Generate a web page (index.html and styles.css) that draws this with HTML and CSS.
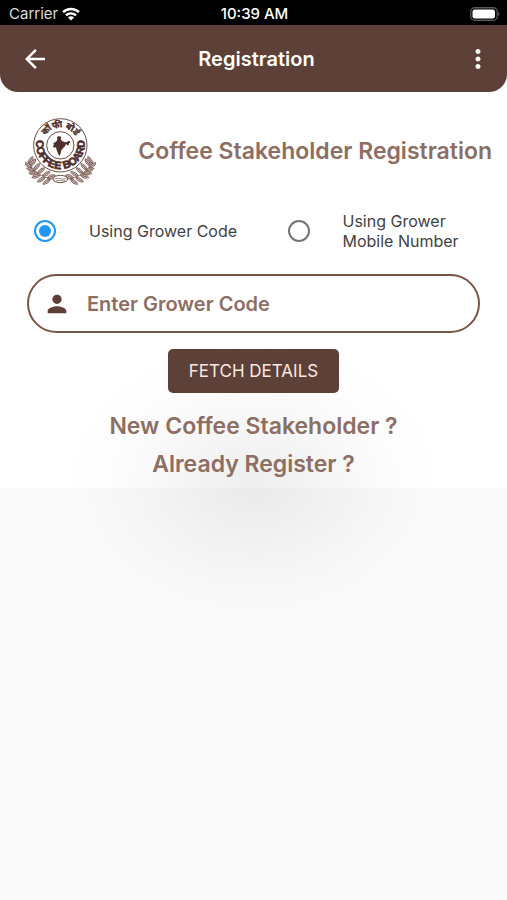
FILE: index.html
```
<!DOCTYPE html>
<html lang="en">
<head>
  <meta charset="utf-8">
  <meta name="viewport" content="width=device-width, initial-scale=1">
  <title>Registration</title>
  <link rel="stylesheet" href="styles.css">
</head>
<body>
  <div class="status-bar">
    <div class="carrier">
      <span>Carrier</span>
      <svg width="18" height="14" viewBox="0 0 18 14" fill="none" stroke="#fff" stroke-width="2.4">
        <path d="M1 5.2C5.4 .9 12.6 .9 17 5.2"/>
        <path d="M4 8.4c2.8-2.7 7.200-2.700 10 0"/>
        <path d="M9 13.500L5.900 10.500c1.700-1.600 4.500-1.600 6.200 0z" fill="#fff" stroke="none"/>
      </svg>
    </div>
    <div class="clock">10:39 AM</div>
    <div class="battery">
      <svg width="30" height="14" viewBox="0 0 30 14">
        <rect x=".75" y=".75" width="26.500" height="12.500" rx="4" fill="none" stroke="#5a5a5a" stroke-width="1.300"/>
        <rect x="2.500" y="2.500" width="22.500" height="9" rx="2.200" fill="#fff"/>
        <path d="M28.300 4.800c1.700.7 1.700 3.700 0 4.400z" fill="#5a5a5a"/>
      </svg>
    </div>
  </div>

  <header class="app-bar">
    <button type="button" class="icon-button" aria-label="Back">
      <svg width="30" height="30" viewBox="0 0 24 24" fill="#fff"><path d="M20 11H7.830l5.590-5.590L12 4l-8 8 8 8 1.410-1.410L7.830 13H20v-2z"/></svg>
    </button>
    <h1>Registration</h1>
    <button type="button" class="icon-button" aria-label="Menu">
      <svg width="30" height="30" viewBox="0 0 24 24" fill="#fff"><path d="M12 8c1.100 0 2-.9 2-2s-.9-2-2-2-2 .9-2 2 .9 2 2 2zm0 2c-1.100 0-2 .9-2 2s.9 2 2 2 2-.9 2-2-.9-2-2-2zm0 6c-1.100 0-2 .9-2 2s.9 2 2 2 2-.9 2-2-.9-2-2-2z"/></svg>
    </button>
  </header>

  <main class="content">
    <div class="brand">
      <svg class="logo" viewBox="30 22 213 198" role="img" aria-label="Coffee Board">
        <defs>
          <path id="arc-top" d="M83 104a53 53 0 0 1 106 0"/>
          <path id="arc-bottom" d="M64 90a73 73 0 1 0 144 0"/>
          <path id="leaf" d="M0 0C4-9 12-14 23-13 20-4 12 2 0 0zM3-1L18-10"/>
          <g id="branch">
            <path d="M38 152C55 182 80 200 112 205" fill="none"/>
            <use href="#leaf" transform="translate(40 160) rotate(-30)"/>
            <use href="#leaf" transform="translate(46 166) rotate(-25)"/>
            <use href="#leaf" transform="translate(56 178) rotate(-18)"/>
            <use href="#leaf" transform="translate(68 188) rotate(-10)"/>
            <use href="#leaf" transform="translate(82 196) rotate(0)"/>
            <use href="#leaf" transform="translate(96 202) rotate(10)"/>
            <use href="#leaf" transform="translate(50 172) rotate(-115)"/>
            <use href="#leaf" transform="translate(60 182) rotate(-132)"/>
            <use href="#leaf" transform="translate(68 188) rotate(-150)"/>
            <use href="#leaf" transform="translate(76 194) rotate(-165)"/>
            <use href="#leaf" transform="translate(90 201) rotate(-180)"/>
            <use href="#leaf" transform="translate(106 206) rotate(-185)"/>
          </g>
        </defs>
        <g fill="#d9c9c5" stroke="#7b5b54" stroke-width="2.600">
          <use href="#branch"/>
          <use href="#branch" transform="translate(272 0) scale(-1 1)"/>
        </g>
        <circle cx="136" cy="104" r="80" fill="#fff" stroke="#6d4c45" stroke-width="3"/>
        <circle cx="136" cy="104" r="41" fill="none" stroke="#6d4c45" stroke-width="3"/>
        <path fill="#4e2f2c" d="M126 80l5-4 8 3-2 6 4 6 9 4 6-1 5-4 6 4-5 4-2 7-4-2-3-4-2 6-7 8-5 6-2 9-3 8-4-5-5-13-2-8-6 1-4-5 4-3-2-5 8-5 4-6z"/>
        <text class="logo-hindi"><textPath href="#arc-top" startOffset="50%">कॉफी बोर्ड</textPath></text>
        <text class="logo-name"><textPath href="#arc-bottom" startOffset="50%">COFFEE BOARD</textPath></text>
        <ellipse cx="136" cy="205" rx="22" ry="11" fill="#fff" stroke="#6d4c45" stroke-width="3"/>
        <path d="M118 206c10-9 23 5 36-4M122 211c10-5 20 3 29-2" fill="none" stroke="#6d4c45" stroke-width="2"/>
      </svg>
      <h2>Coffee Stakeholder Registration</h2>
    </div>

    <form>
      <div class="options">
        <label class="option">
          <input type="radio" name="method" value="code" checked>
          <span>Using Grower Code</span>
        </label>
        <label class="option">
          <input type="radio" name="method" value="mobile">
          <span>Using Grower Mobile Number</span>
        </label>
      </div>

      <div class="field">
        <label for="grower-code" aria-label="Grower code">
          <svg width="28" height="28" viewBox="0 0 24 24" fill="#5d4037"><path d="M12 12c2.210 0 4-1.790 4-4s-1.790-4-4-4-4 1.790-4 4 1.790 4 4 4zm0 2c-2.670 0-8 1.340-8 4v2h16v-2c0-2.660-5.330-4-8-4z"/></svg>
        </label>
        <input type="text" id="grower-code" placeholder="Enter Grower Code">
      </div>

      <button type="submit" class="fetch">FETCH DETAILS</button>
    </form>

    <nav class="links">
      <a href="#new">New Coffee Stakeholder ?</a>
      <a href="#login">Already Register ?</a>
    </nav>
  </main>
</body>
</html>
```
FILE: styles.css
```
* {
  box-sizing: border-box;
}

body {
  margin: 0;
  min-height: 100vh;
  background-color: #fafafa;
  color: #424242;
  font-family: Inter, Roboto, sans-serif;
}

h1, h2 {
  margin: 0;
  font-weight: 600;
}

svg {
  display: block;
}

.status-bar {
  display: grid;
  grid-template-columns: 1fr auto 1fr;
  align-items: center;
  height: 25px;
  padding: 2px 7px 0 9px;
  background-color: #000;
  color: #fff;
  font-size: 15px;
}

.carrier {
  display: flex;
  align-items: center;
  gap: 4px;
  color: #ddd;
}

.clock {
  font-weight: 500;
}

.battery {
  justify-self: end;
}

.app-bar {
  display: flex;
  align-items: center;
  justify-content: space-between;
  height: 67px;
  padding: 0 14px 0 20px;
  border-radius: 0 0 18px 18px;
  background-color: #5d4037;
  color: #fff;
}

.app-bar h1 {
  font-size: 20px;
}

.icon-button {
  padding: 0;
  border: 0;
  background: none;
  cursor: pointer;
}

/* white runs up behind the rounded corners of the app bar */
.content {
  position: relative;
  z-index: 0;
  padding: 25px 0 10px;
  background-color: #fff;
}

body::before {
  content: "";
  position: absolute;
  z-index: -1;
  top: 0;
  left: 0;
  right: 0;
  height: 100px;
  background-color: #fff;
}

/* soft shadow across the bottom edge */
.content::after {
  content: "";
  position: absolute;
  z-index: -1;
  left: 12%;
  right: 12%;
  bottom: -140px;
  height: 290px;
  background: radial-gradient(closest-side, rgba(0, 0, 0, 0.065), rgba(0, 0, 0, 0.04) 35%, rgba(0, 0, 0, 0.01) 70%, transparent);
}

.brand {
  display: flex;
  align-items: center;
  justify-content: space-between;
  padding: 0 15px 0 25px;
}

.logo {
  width: 71px;
  height: 68px;
}

.logo text {
  fill: #4e2f2c;
  stroke: #4e2f2c;
  text-anchor: middle;
  font-weight: 700;
}

.logo-hindi {
  font-family: "Noto Sans Devanagari", "Lohit Devanagari", "Noto Sans", sans-serif;
  font-size: 27px;
  stroke-width: 1;
}

.logo-name {
  font-family: "Liberation Sans Narrow", "Liberation Sans", sans-serif;
  font-size: 32px;
  stroke-width: 2;
}

.brand h2 {
  color: #8d6e63;
  font-size: 23px;
}

.options {
  display: grid;
  grid-template-columns: 1fr 1fr;
  align-items: center;
  margin-top: 26px;
}

.option {
  display: flex;
  align-items: center;
  gap: 33px;
  padding: 0 36px 0 34px;
  font-size: 16px;
  line-height: 20px;
}

.option:first-child {
  padding-right: 0;
}

.option input {
  flex: none;
  display: grid;
  place-items: center;
  width: 22px;
  height: 22px;
  margin: 0;
  border: 2px solid #757575;
  border-radius: 50%;
  appearance: none;
}

.option input:checked {
  border-color: #2196f3;
}

.option input:checked::before {
  content: "";
  width: 12px;
  height: 12px;
  border-radius: 50%;
  background-color: #2196f3;
}

.field {
  display: flex;
  align-items: center;
  gap: 16px;
  height: 59px;
  margin: 23px 27px 0;
  padding: 0 14px;
  border: 2px solid #795548;
  border-radius: 30px;
}

.field input {
  flex: 1;
  min-width: 0;
  padding: 0;
  border: 0;
  outline: 0;
  background: none;
  color: #5d4037;
  font-family: inherit;
  font-size: 20px;
  font-weight: 600;
}

.field input::placeholder {
  color: #8d6e63;
  opacity: 1;
}

.fetch {
  display: block;
  height: 44px;
  margin: 16px auto 0;
  padding: 0 21px;
  border: 0;
  border-radius: 5px;
  background-color: #5d4037;
  color: #fbe9e0;
  font-family: inherit;
  font-size: 17px;
  cursor: pointer;
}

.links {
  display: flex;
  flex-direction: column;
  align-items: center;
  gap: 10px;
  margin-top: 19px;
}

.links a {
  color: #8d6e63;
  font-size: 23px;
  font-weight: 600;
  line-height: 28px;
  text-decoration: none;
}
```
